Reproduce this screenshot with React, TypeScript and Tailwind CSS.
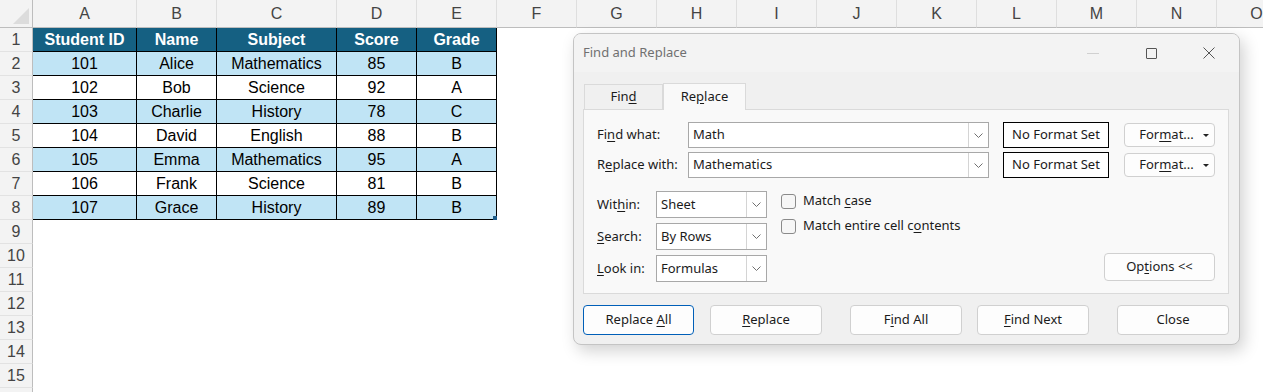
import React from "react";

const COLS = [
  { l: "A", w: 104 },
  { l: "B", w: 80 },
  { l: "C", w: 120 },
  { l: "D", w: 80 },
  { l: "E", w: 80 },
  { l: "F", w: 80 },
  { l: "G", w: 80 },
  { l: "H", w: 80 },
  { l: "I", w: 80 },
  { l: "J", w: 80 },
  { l: "K", w: 80 },
  { l: "L", w: 80 },
  { l: "M", w: 80 },
  { l: "N", w: 80 },
  { l: "O", w: 80 },
];

const HEAD = ["Student ID", "Name", "Subject", "Score", "Grade"];
const DATA = [
  ["101", "Alice", "Mathematics", "85", "B"],
  ["102", "Bob", "Science", "92", "A"],
  ["103", "Charlie", "History", "78", "C"],
  ["104", "David", "English", "88", "B"],
  ["105", "Emma", "Mathematics", "95", "A"],
  ["106", "Frank", "Science", "81", "B"],
  ["107", "Grace", "History", "89", "B"],
];

const gridCols =
  "grid grid-cols-[33px_104px_80px_120px_80px_80px_80px_80px_80px_80px_80px_80px_80px_80px_80px_80px]";

function Sheet() {
  const rows = Array.from({ length: 16 }, (_, i) => i + 1);
  return (
    <div className={`${gridCols} w-max [font-family:'Liberation_Sans',sans-serif] text-[16px]`}>
      {/* column headers */}
      <div className="relative h-[28px] border-r border-b border-[#bdbdbd] bg-[#f3f3f3]">
        <svg className="absolute right-[3px] bottom-[3px]" width="16" height="16" viewBox="0 0 16 16">
          <polygon points="16,0 16,16 0,16" fill="#dcdcdc" />
        </svg>
      </div>
      {COLS.map((c) => (
        <div
          key={c.l}
          className="flex h-[28px] items-center justify-center border-r border-b border-[#bdbdbd] border-r-[#dedede] bg-[#f3f3f3] pt-[1px] text-[#444]"
        >
          {c.l}
        </div>
      ))}
      {rows.map((r) => (
        <React.Fragment key={r}>
          <div className="flex h-[24px] items-center justify-center border-r border-b border-[#bdbdbd] border-b-[#e2e2e2] bg-[#f3f3f3] pt-[1px] text-[#444]">
            {r <= 15 ? r : ""}
          </div>
          {COLS.map((c, ci) => {
            const inTable = ci < 5 && r <= 8;
            if (!inTable) return <div key={c.l} className="h-[24px] bg-white" />;
            const isHead = r === 1;
            const val = isHead ? HEAD[ci] : DATA[r - 2][ci];
            const bg = isHead
              ? "bg-[#156082] text-white font-bold"
              : r % 2 === 0
                ? "bg-[#c0e4f5] text-black"
                : "bg-white text-black";
            return (
              <div
                key={c.l}
                className={`relative flex h-[24px] items-center justify-center border-r border-b border-black pt-[1px] ${bg}`}
              >
                {val}
                {r === 8 && ci === 4 && (
                  <span className="absolute right-[-1px] bottom-[-1px] h-[4px] w-[4px] bg-[#1d5c8a]" />
                )}
              </div>
            );
          })}
        </React.Fragment>
      ))}
    </div>
  );
}

function U({ children }: { children: React.ReactNode }) {
  return <span className="underline underline-offset-2">{children}</span>;
}

function Chevron() {
  return (
    <svg width="9" height="5" viewBox="0 0 9 5">
      <polyline points="0.5,0.5 4.5,4.5 8.5,0.5" fill="none" stroke="#707070" strokeWidth="1" />
    </svg>
  );
}

function Combo({ value, w, h }: { value: string; w: number; h: number }) {
  return (
    <div
      className="flex items-stretch border border-[#a8a8a8] bg-white"
      style={{ width: w, height: h }}
    >
      <div className="flex flex-1 items-center pl-[4px]">{value}</div>
      <div className="flex w-[20px] items-center justify-center border-l border-[#d4d4d4]">
        <Chevron />
      </div>
    </div>
  );
}

function Btn({
  children,
  w,
  h = 30,
  focus,
  className = "",
}: {
  children: React.ReactNode;
  w: number;
  h?: number;
  focus?: boolean;
  className?: string;
}) {
  return (
    <div
      className={`flex items-center justify-center rounded-[4px] border bg-[#fdfdfd] ${
        focus ? "border-[#005fb8]" : "border-[#d0d0d0]"
      } ${className}`}
      style={{ width: w, height: h }}
    >
      {children}
    </div>
  );
}

function Check({ children }: { children: React.ReactNode }) {
  return (
    <div className="flex h-[14px] items-center">
      <span className="h-[15px] w-[15px] rounded-[3px] border border-[#8a8a8a] bg-[#f6f6f6]" />
      <span className="ml-[7px]">{children}</span>
    </div>
  );
}

function FormatBtn() {
  return (
    <Btn w={91} h={24} className="relative ml-[15px]">
      <span className="ml-[-6px]">
        For<U>m</U>at...
      </span>
      <span className="absolute right-[5px] top-[10px] h-0 w-0 border-x-[3px] border-t-[3px] border-x-transparent border-t-[#222]" />
    </Btn>
  );
}

function Dialog() {
  return (
    <div className="absolute left-[573px] top-[33px] h-[312px] w-[667px] overflow-hidden rounded-[8px] border border-[#c4c4c4] bg-[#f0f0f0] text-[13px] text-[#1b1b1b] shadow-[4px_6px_16px_rgba(0,0,0,0.18)] [font-family:'Noto_Sans',sans-serif]">
      <div className="flex h-[38px] items-center bg-[#f3f3f3] pl-[9px]">
        <span className="text-[#707070]">Find and Replace</span>
        <div className="ml-auto mr-[1px] flex h-full items-center">
          <div className="flex w-[58px] items-center justify-center">
            <span className="h-px w-[12px] bg-[#d0d0d0]" />
          </div>
          <div className="flex w-[58px] items-center justify-center">
            <span className="h-[11px] w-[11px] rounded-[1px] border border-[#555]" />
          </div>
          <div className="flex w-[58px] items-center justify-center">
            <svg width="12" height="12" viewBox="0 0 12 12">
              <path d="M0.5 0.5 L11.5 11.5 M11.5 0.5 L0.5 11.5" stroke="#555" strokeWidth="1" />
            </svg>
          </div>
        </div>
      </div>

      <div className="px-[9px] pt-[10px]">
        <div className="flex items-end pl-[1px]">
          <div className="flex h-[25px] w-[79px] items-center justify-center border border-b-0 border-[#dadada] bg-[#f0f0f0]">
            <span>
              Fin<U>d</U>
            </span>
          </div>
          <div className="relative top-[1px] z-10 flex h-[27px] w-[83px] items-center justify-center border border-b-0 border-[#dadada] bg-[#f9f9f9]">
            <span>
              Re<U>p</U>lace
            </span>
          </div>
        </div>

        <div className="h-[185px] w-[646px] border border-[#dadada] bg-[#f9f9f9] px-[13px] pt-[12px]">
          <div className="flex h-[26px] items-center">
            <span className="w-[91px]">
              Fi<U>n</U>d what:
            </span>
            <Combo value="Math" w={301} h={26} />
            <div className="ml-[14px] flex h-[26px] w-[106px] items-center justify-center border border-black bg-white">
              No Format Set
            </div>
            <FormatBtn />
          </div>
          <div className="mt-[4px] flex h-[26px] items-center">
            <span className="w-[91px]">
              R<U>e</U>place with:
            </span>
            <Combo value="Mathematics" w={301} h={26} />
            <div className="ml-[14px] flex h-[26px] w-[106px] items-center justify-center border border-black bg-white">
              No Format Set
            </div>
            <FormatBtn />
          </div>

          <div className="mt-[13px] flex">
            <div className="flex flex-col gap-[5px]">
              <div className="flex items-center">
                <span className="w-[59px]">
                  Wit<U>h</U>in:
                </span>
                <Combo value="Sheet" w={111} h={27} />
              </div>
              <div className="flex items-center">
                <span className="w-[59px]">
                  <U>S</U>earch:
                </span>
                <Combo value="By Rows" w={111} h={27} />
              </div>
              <div className="flex items-center">
                <span className="w-[59px]">
                  <U>L</U>ook in:
                </span>
                <Combo value="Formulas" w={111} h={27} />
              </div>
            </div>
            <div className="ml-[14px] flex flex-col gap-[11px] pt-[3px]">
              <Check>
                Match <U>c</U>ase
              </Check>
              <Check>
                Match entire cell c<U>o</U>ntents
              </Check>
            </div>
            <div className="ml-auto flex items-end pb-[1px]">
              <Btn w={111} h={28}>
                <span>
                  Op<U>t</U>ions &lt;&lt;
                </span>
              </Btn>
            </div>
          </div>
        </div>

        <div className="mt-[11px] flex">
          <Btn w={111} focus>
            <span>
              Replace <U>A</U>ll
            </span>
          </Btn>
          <Btn w={112} className="ml-[16px]">
            <span>
              <U>R</U>eplace
            </span>
          </Btn>
          <Btn w={112} className="ml-[28px]">
            <span>
              F<U>i</U>nd All
            </span>
          </Btn>
          <Btn w={112} className="ml-[15px]">
            <span>
              <U>F</U>ind Next
            </span>
          </Btn>
          <Btn w={112} className="ml-[28px]">
            <span>Close</span>
          </Btn>
        </div>
      </div>
    </div>
  );
}

export default function App() {
  return (
    <div className="relative h-[392px] w-[1263px] overflow-hidden bg-white">
      <Sheet />
      <Dialog />
    </div>
  );
}
